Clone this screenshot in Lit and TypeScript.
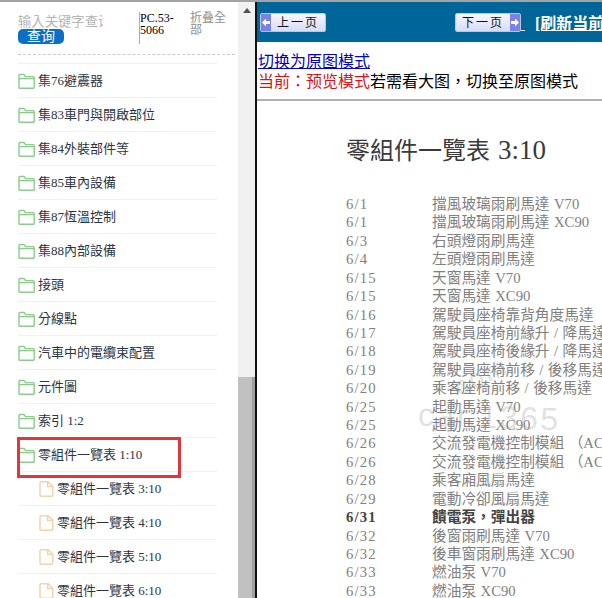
import { LitElement, html, css } from 'lit';
import { customElement } from 'lit/decorators.js';

const folders = ['集76避震器', '集83車門與開啟部位', '集84外裝部件等', '集85車內設備', '集87恆溫控制', '集88內部設備', '接頭', '分線點', '汽車中的電纜束配置', '元件圖', '索引 1:2', '零組件一覽表 1:10'];
const files = ['零組件一覽表 3:10', '零組件一覽表 4:10', '零組件一覽表 5:10', '零組件一覽表 6:10'];

const parts = [
    ['6/1', '擋風玻璃雨刷馬達 V70'],
    ['6/1', '擋風玻璃雨刷馬達 XC90'],
    ['6/3', '右頭燈雨刷馬達'],
    ['6/4', '左頭燈雨刷馬達'],
    ['6/15', '天窗馬達 V70'],
    ['6/15', '天窗馬達 XC90'],
    ['6/16', '駕駛員座椅靠背角度馬達'],
    ['6/17', '駕駛員座椅前緣升 / 降馬達'],
    ['6/18', '駕駛員座椅後緣升 / 降馬達'],
    ['6/19', '駕駛員座椅前移 / 後移馬達'],
    ['6/20', '乘客座椅前移 / 後移馬達'],
    ['6/25', '起動馬達 V70'],
    ['6/25', '起動馬達 XC90'],
    ['6/26', '交流發電機控制模組 （AC'],
    ['6/26', '交流發電機控制模組 （AC'],
    ['6/28', '乘客廂風扇馬達'],
    ['6/29', '電動冷卻風扇馬達'],
    ['6/31', '饋電泵，彈出器'],
    ['6/32', '後窗雨刷馬達 V70'],
    ['6/32', '後車窗雨刷馬達 XC90'],
    ['6/33', '燃油泵 V70'],
    ['6/33', '燃油泵 XC90'],
];

const folderIcon = html`<svg class="icon" width="17" height="16" viewBox="0 0 17 16" fill="none" stroke="#8ccc8c" stroke-width="1.4">
    <path d="M1 14.4V2.4C1 1.8 1.4 1.5 2 1.5H6L7.6 3.6H15.2C15.8 3.6 16.2 4 16.2 4.6V14.4C16.2 15 15.8 15.3 15.2 15.3H2C1.4 15.3 1 15 1 14.4Z"/>
    <path d="M1 5.6H16.2"/>
</svg>`;

const fileIcon = html`<svg class="icon" width="15" height="16" viewBox="0 0 15 16" fill="none" stroke="#f1d4ac" stroke-width="1.5">
    <path d="M1 2C1 1.2 1.4 .8 2.2 .8H9L13.8 5.4V14C13.8 14.8 13.4 15.2 12.6 15.2H2.2C1.4 15.2 1 14.8 1 14Z"/>
    <path d="M8.6 .8V5.6H13.8"/>
</svg>`;

const arrowLeft = html`<svg width="8" height="9" viewBox="0 0 8 9" fill="#fff"><path d="M0 4.5 4 .5V3H8V6H4V8.5Z"/></svg>`;
const arrowRight = html`<svg width="8" height="9" viewBox="0 0 8 9" fill="#fff"><path d="M8 4.5 4 .5V3H0V6H4V8.5Z"/></svg>`;

@customElement('app-root')
export class AppRoot extends LitElement {
    static styles = css`
        :host {
            display: flex;
            flex-direction: column;
            height: 100vh;
            overflow: hidden;
            position: relative;
            background: #fff;
            font-family: "Liberation Serif", "Noto Sans CJK TC", serif;
            color: #000;
        }
        .topline {
            height: 2px;
            flex: none;
            background: #a3a3a3;
        }
        .main {
            flex: 1;
            min-height: 0;
            display: flex;
        }
        .side {
            width: 238px;
            flex: none;
            overflow: hidden;
        }
        .search {
            height: 52px;
            margin: 0 3px 0 18px;
            display: flex;
            border-bottom: 1px dashed #ccc;
        }
        .search-box {
            width: 121px;
            flex: none;
            padding-top: 13px;
        }
        .placeholder {
            width: 85px;
            height: 14px;
            overflow: hidden;
            white-space: nowrap;
            font-size: 13.33px;
            line-height: 14px;
            color: #b5b5b5;
        }
        .search-btn {
            width: 46px;
            height: 15px;
            border-radius: 5px;
            background: #0b6fc6;
            color: #fff;
            font-size: 14px;
            line-height: 15px;
            text-align: center;
        }
        .code {
            width: 51px;
            height: 32px;
            margin-top: 10px;
            flex: none;
            border-left: 1px solid #aaa;
            font-size: 12px;
            line-height: 12px;
            box-sizing: border-box;
        }
        .collapse {
            width: 40px;
            margin-top: 10px;
            font-size: 12px;
            line-height: 12px;
            color: #8f8f8f;
        }
        .tree {
            margin: 8px 21px 0 18px;
            border-top: 1px solid #f1f1f1;
        }
        .row {
            height: 33px;
            display: flex;
            align-items: center;
            gap: 3px;
            border-bottom: 1px solid #f1f1f1;
            font-size: 13px;
            color: #2c3444;
            white-space: nowrap;
        }
        .row span {
            padding-bottom: 3px;
        }
        .row.child {
            padding-left: 21px;
        }
        .icon {
            flex: none;
        }
        .scrollbar {
            width: 17px;
            flex: none;
            display: flex;
            flex-direction: column;
            align-items: center;
            background: #f1f1f1;
        }
        .arrow {
            margin-top: 6px;
            border: 4px solid transparent;
            border-top: 0;
            border-bottom: 5px solid #505050;
        }
        .thumb {
            margin-top: auto;
            width: 100%;
            height: 221px;
            background: #c1c1c1;
            border-right: 3px solid #a0a0a0;
            box-sizing: border-box;
        }
        .divider {
            width: 2px;
            flex: none;
            background: #111;
        }
        .content {
            flex: 1;
            min-width: 0;
            overflow: hidden;
        }
        .nav {
            height: 40px;
            background: #006699;
            display: flex;
            align-items: center;
            padding-left: 3px;
            white-space: nowrap;
        }
        .page-btn {
            width: 66px;
            height: 19px;
            flex: none;
            display: flex;
            align-items: center;
            box-sizing: border-box;
            border: 1px solid #b9c6ea;
            border-radius: 2px;
            background: linear-gradient(#f6f7ff, #d9dcf2);
            font-size: 12px;
            letter-spacing: 2px;
            color: #111;
        }
        .page-btn.next {
            margin-left: 129px;
        }
        .page-btn span {
            flex: 1;
            text-align: center;
        }
        .page-btn b {
            width: 10px;
            height: 100%;
            flex: none;
            display: flex;
            align-items: center;
            justify-content: center;
            background: #7a82e6;
        }
        .nav a {
            flex: none;
            color: #fff;
            font-size: 16px;
            font-weight: bold;
            text-decoration: underline;
        }
        .nav a.gap {
            width: 4px;
            height: 1px;
            align-self: flex-end;
            margin-bottom: 11px;
            background: #fff;
        }
        .nav a.refresh {
            margin-left: 10px;
        }
        .mode {
            padding: 10px 0 7px 1px;
            border-bottom: 2px solid #b0b0b0;
            font-size: 16px;
            line-height: 20px;
            white-space: nowrap;
        }
        .mode a {
            color: #0000cc;
            text-decoration: underline;
        }
        .mode span {
            color: #e01010;
        }
        .sheet {
            position: relative;
            padding: 35px 0 0 89px;
        }
        .sheet h1 {
            margin: 0 0 30px;
            font-size: 24px;
            line-height: 28px;
            font-weight: 400;
            color: #3a3a3a;
            white-space: nowrap;
        }
        .sheet h1 span {
            margin-left: 2px;
            font-size: 27px;
        }
        .parts {
            display: grid;
            grid-template-columns: 86px 1fr;
            grid-auto-rows: 18.43px;
            font-size: 14.7px;
            line-height: 18.43px;
            word-spacing: .8px;
            color: #808080;
            white-space: nowrap;
        }
        .parts .strong {
            color: #444;
            font-weight: bold;
        }
        .parts .num {
            letter-spacing: 1.2px;
        }
        .mark {
            position: absolute;
            font-family: "Liberation Sans", sans-serif;
            letter-spacing: 2.5px;
            color: rgba(150, 150, 150, .3);
            white-space: nowrap;
        }
        .mark.low {
            left: 161px;
            top: 298px;
            font-size: 32px;
            transform: rotate(2deg);
        }
        .mark.high {
            left: 196px;
            top: 260px;
            font-size: 26px;
            transform: rotate(-25deg);
        }
        .callout {
            position: absolute;
            left: 17px;
            top: 437px;
            width: 164px;
            height: 41px;
            box-sizing: border-box;
            border: 3px solid #e5343a;
            pointer-events: none;
        }
    `;

    render() {
        return html`
            <div class="topline"></div>
            <div class="main">
                <div class="side">
                    <div class="search">
                        <div class="search-box">
                            <div class="placeholder">输入关键字查询</div>
                            <div class="search-btn">查询</div>
                        </div>
                        <div class="code">PC.53-5066</div>
                        <div class="collapse">折叠全部</div>
                    </div>
                    <div class="tree">
                        ${folders.map(name => html`<div class="row">${folderIcon}<span>${name}</span></div>`)}
                        ${files.map(name => html`<div class="row child">${fileIcon}<span>${name}</span></div>`)}
                    </div>
                </div>
                <div class="scrollbar">
                    <div class="arrow"></div>
                    <div class="thumb"></div>
                </div>
                <div class="divider"></div>
                <div class="content">
                    <div class="nav">
                        <div class="page-btn"><b>${arrowLeft}</b><span>上一页</span></div>
                        <div class="page-btn next"><span>下一页</span><b>${arrowRight}</b></div>
                        <a class="gap"></a>
                        <a class="refresh">[刷新当前页]</a>
                    </div>
                    <div class="mode">
                        <a>切换为原图模式</a><br />
                        <span>当前：预览模式</span>若需看大图，切换至原图模式
                    </div>
                    <div class="sheet">
                        <h1>零組件一覽表 <span>3:10</span></h1>
                        <div class="parts">
                            ${parts.map(([page, label]) => html`
                                <div class="num ${page === '6/31' ? 'strong' : ''}">${page}</div>
                                <div class="${page === '6/31' ? 'strong' : ''}">${label}</div>
                            `)}
                        </div>
                        <div class="mark high">com</div>
                        <div class="mark low">car.1365</div>
                    </div>
                </div>
            </div>
            <div class="callout"></div>
        `;
    }
}
